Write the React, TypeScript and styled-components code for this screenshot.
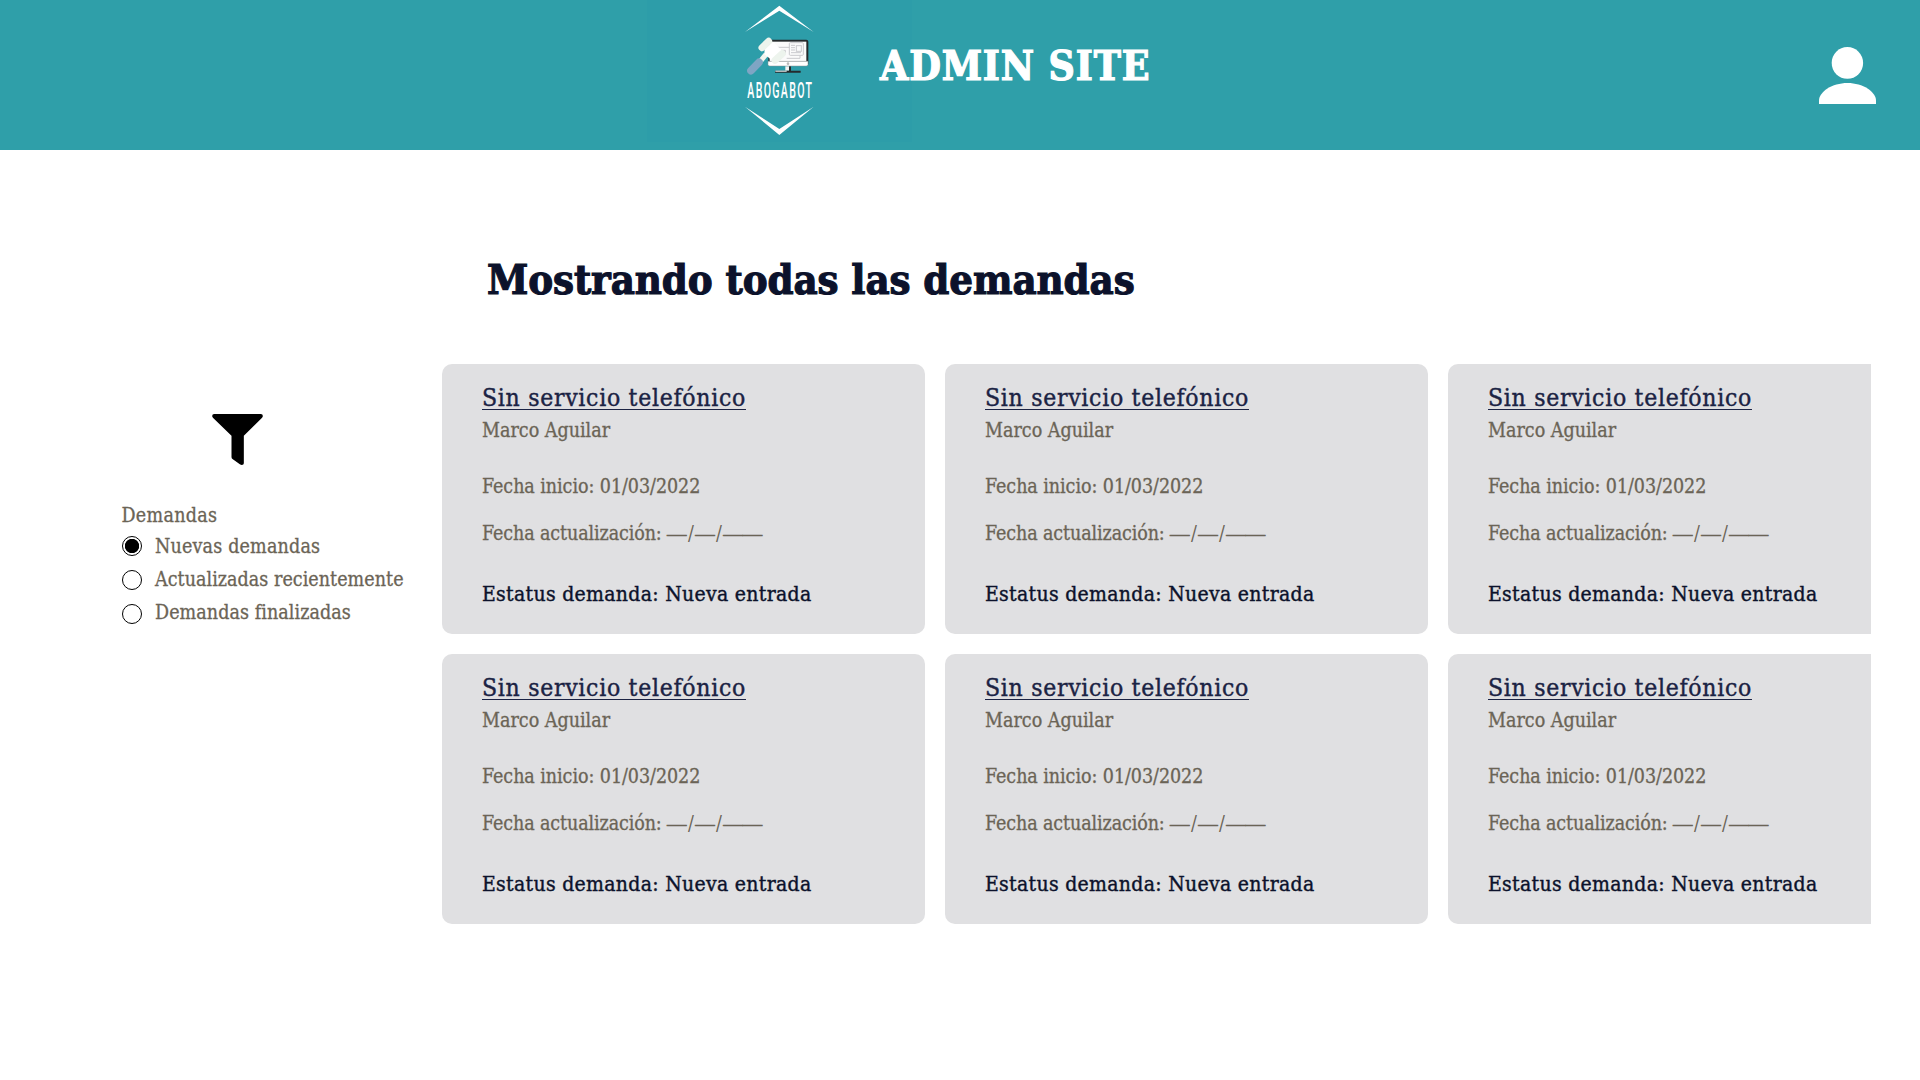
import React, { useState } from 'react';
import styled, { createGlobalStyle } from 'styled-components';

const slab = `'DejaVu Serif Condensed', 'DejaVu Serif', serif`;

const GlobalStyle = createGlobalStyle`
  * { box-sizing: border-box; }
  body { margin: 0; background: #fff; }
`;

const Page = styled.div`
  width: 1920px;
  height: 1080px;
  overflow: hidden;
  font-family: ${slab};
  color: #6b6456;
  background: #fff;
`;

const Header = styled.header`
  display: flex;
  align-items: flex-start;
  height: 150px;
  padding: 0 44px 0 647px;
  background: #2f9fa9;
`;

const LogoPanel = styled.div`
  width: 265px;
  height: 142px;
  background: #2d9da9;
`;

const SiteName = styled.h1`
  margin: 36px 0 0 -32px;
  font-size: 40.5px;
  line-height: 60px;
  font-weight: 700;
  letter-spacing: 0.88px;
  color: #fff;
  -webkit-text-stroke: 1.2px #fff;
  white-space: nowrap;
`;

const Account = styled.button`
  display: block;
  margin: 47px 0 0 auto;
  padding: 0;
  border: 0;
  background: none;
  svg { display: block; }
`;

const Body = styled.main`
  display: flex;
  height: 930px;
`;

const Sidebar = styled.aside`
  width: 442px;
  padding: 264px 0 0 121px;
`;

const FilterIcon = styled.svg`
  display: block;
  width: 51px;
  height: 51px;
  margin: 0 0 36px 91px;
`;

const GroupName = styled.p`
  margin: 0 0 2px 0.5px;
  font-size: 19.5px;
  line-height: 29px;
  letter-spacing: 0.3px;
  -webkit-text-stroke: 0.3px currentColor;
`;

const Option = styled.label`
  display: flex;
  align-items: flex-start;
  gap: 13px;
  height: 33px;
`;

const Radio = styled.input<{ $drop: number }>`
  appearance: none;
  width: 20px;
  height: 20px;
  margin: ${p => p.$drop}px 0 0 1px;
  border: 1.4px solid #000;
  border-radius: 50%;
  background: #fff;
  &:checked {
    background: radial-gradient(circle, #000 6.8px, #fff 7.5px);
  }
`;

const OptionText = styled.span<{ $track: number }>`
  font-size: 19.5px;
  line-height: 29px;
  letter-spacing: ${p => p.$track}px;
  -webkit-text-stroke: 0.3px currentColor;
  white-space: nowrap;
`;

const Content = styled.section`
  width: 1429px;
  padding-top: 99px;
  overflow: hidden;
`;

const Heading = styled.h2`
  margin: 0 0 54px 45px;
  font-size: 41.5px;
  line-height: 61px;
  font-weight: 700;
  letter-spacing: -0.1px;
  color: #0c122b;
  -webkit-text-stroke: 1.1px #0c122b;
  white-space: nowrap;
`;

const Cards = styled.div`
  display: grid;
  grid-template-columns: repeat(3, 483px);
  grid-auto-rows: 270px;
  gap: 20px;
`;

const Card = styled.article`
  display: flex;
  flex-direction: column;
  align-items: flex-start;
  padding: 17px 39px 0 40px;
  border-radius: 10px;
  background: #e0e0e2;
  white-space: nowrap;
`;

const CardTitle = styled.a`
  font-size: 24.5px;
  line-height: 33px;
  letter-spacing: 0.71px;
  color: #1b2344;
  -webkit-text-stroke: 0.4px currentColor;
  text-decoration: underline;
  text-decoration-thickness: 1px;
  text-decoration-skip-ink: none;
  text-underline-offset: 3px;
`;

const Line = styled.p<{ $top: number; $track?: number }>`
  margin: ${p => p.$top}px 0 0;
  font-size: 19.5px;
  line-height: 29px;
  letter-spacing: ${p => p.$track ?? 0}px;
  -webkit-text-stroke: 0.3px currentColor;
`;

const Blank = styled.span`
  font-family: 'Liberation Serif', serif;
  letter-spacing: 0;
  -webkit-text-stroke: 0.5px currentColor;
`;

const Slash = styled.span`
  padding: 0 1.3px;
  font-family: ${slab};
  -webkit-text-stroke: 0;
`;

const Status = styled.p`
  margin: 31px 0 0;
  font-size: 21px;
  line-height: 31px;
  letter-spacing: 0.3px;
  color: #0c122b;
  -webkit-text-stroke: 0.4px #0c122b;
`;

const Logo = () => (
  <svg width="265" height="142" viewBox="0 0 265 142">
    <g transform="translate(73 0) scale(.33333)">
      <path d="M75 96L178 17l103 79-103-64z" fill="#fff" />
      <path d="M75 320l103 85 103-85-103 67z" fill="#fff" />
      <rect x="145" y="119" width="120" height="78" rx="6" fill="#252a2c" />
      <rect x="149" y="125" width="110" height="59" fill="#fbfbfb" />
      <path d="M144 184h120v9q0 5-5 5H149q-5 0-5-5z" fill="#fff" stroke="#8b9396" strokeWidth="1.5" />
      <circle cx="204" cy="191" r="4" fill="#bbb" />
      <path d="M196 199h17v13h-17z" fill="#f3f3f3" />
      <path d="M207 199h6v13h-6zM165 212h77v6h-77z" fill="#252a2c" />
      <path d="M166 212h34v3h-34z" fill="#fff" />
      <g fill="none" stroke="#c9c9cd" strokeWidth="3">
        <rect x="208" y="128" width="42" height="38" rx="3" />
        <rect x="229" y="137" width="15" height="17" />
        <path d="M213 136h12M213 143h12M213 150h12M213 158h30M170 142h38M182 151h14v12M200 175h40v-8" />
      </g>
      <path d="M121 184l17-21" stroke="#f1f5ef" strokeWidth="15" />
      <path d="M93 212l24-25" stroke="#7fa5c4" strokeWidth="23" strokeLinecap="round" />
      <path d="M134 143l27-16 28 28-9 22-24 4-23-18z" fill="#fff" />
      <path d="M126 143l20-19M165 181l22-20" stroke="#edf4ed" strokeWidth="21" strokeLinecap="round" />
      <text transform="translate(82 294) scale(.48 1)" fontFamily="Roboto, sans-serif" fontWeight="500" fontSize="66" fill="#fff" textLength="404" lengthAdjust="spacing">ABOGABOT</text>
    </g>
  </svg>
);

const UserIcon = () => (
  <svg width="57" height="57" viewBox="0 0 57 57" fill="#fff">
    <ellipse cx="28.4" cy="15.9" rx="15.7" ry="15.9" />
    <path d="M0 57V53.5C0 45 13 36 28.5 36S57 45 57 53.5V57Z" />
  </svg>
);

const options = [
  { text: 'Nuevas demandas', track: 0.17, drop: 4 },
  { text: 'Actualizadas recientemente', track: 0.04, drop: 5 },
  { text: 'Demandas finalizadas', track: 0.07, drop: 6 },
];

const claims = Array.from({ length: 6 }, (_, id) => ({
  id,
  title: 'Sin servicio telefónico',
  client: 'Marco Aguilar',
  start: '01/03/2022',
  status: 'Nueva entrada',
}));

export default function App() {
  const [selected, setSelected] = useState(0);
  return (
    <Page>
      <GlobalStyle />
      <Header>
        <LogoPanel><Logo /></LogoPanel>
        <SiteName>ADMIN SITE</SiteName>
        <Account><UserIcon /></Account>
      </Header>
      <Body>
        <Sidebar>
          <FilterIcon viewBox="0 0 152 153">
            <path d="M6 0H146Q152 0 152 6Q152 9 149 12L95 65V148Q95 153 89 153Q86 153 83 151L61 135Q58 133 58 129V65L3 12Q0 9 0 6Q0 0 6 0Z" />
          </FilterIcon>
          <GroupName>Demandas</GroupName>
          {options.map((o, i) => (
            <Option key={o.text}>
              <Radio type="radio" name="demandas" $drop={o.drop} checked={selected === i} onChange={() => setSelected(i)} />
              <OptionText $track={o.track}>{o.text}</OptionText>
            </Option>
          ))}
        </Sidebar>
        <Content>
          <Heading>Mostrando todas las demandas</Heading>
          <Cards>
            {claims.map(c => (
              <Card key={c.id}>
                <CardTitle>{c.title}</CardTitle>
                <Line $top={2}>{c.client}</Line>
                <Line $top={27} $track={-0.06}>Fecha inicio: {c.start}</Line>
                <Line $top={18} $track={-0.11}>
                  Fecha actualización: <Blank>—<Slash>/</Slash>—<Slash>/</Slash>——</Blank>
                </Line>
                <Status>Estatus demanda: {c.status}</Status>
              </Card>
            ))}
          </Cards>
        </Content>
      </Body>
    </Page>
  );
}
